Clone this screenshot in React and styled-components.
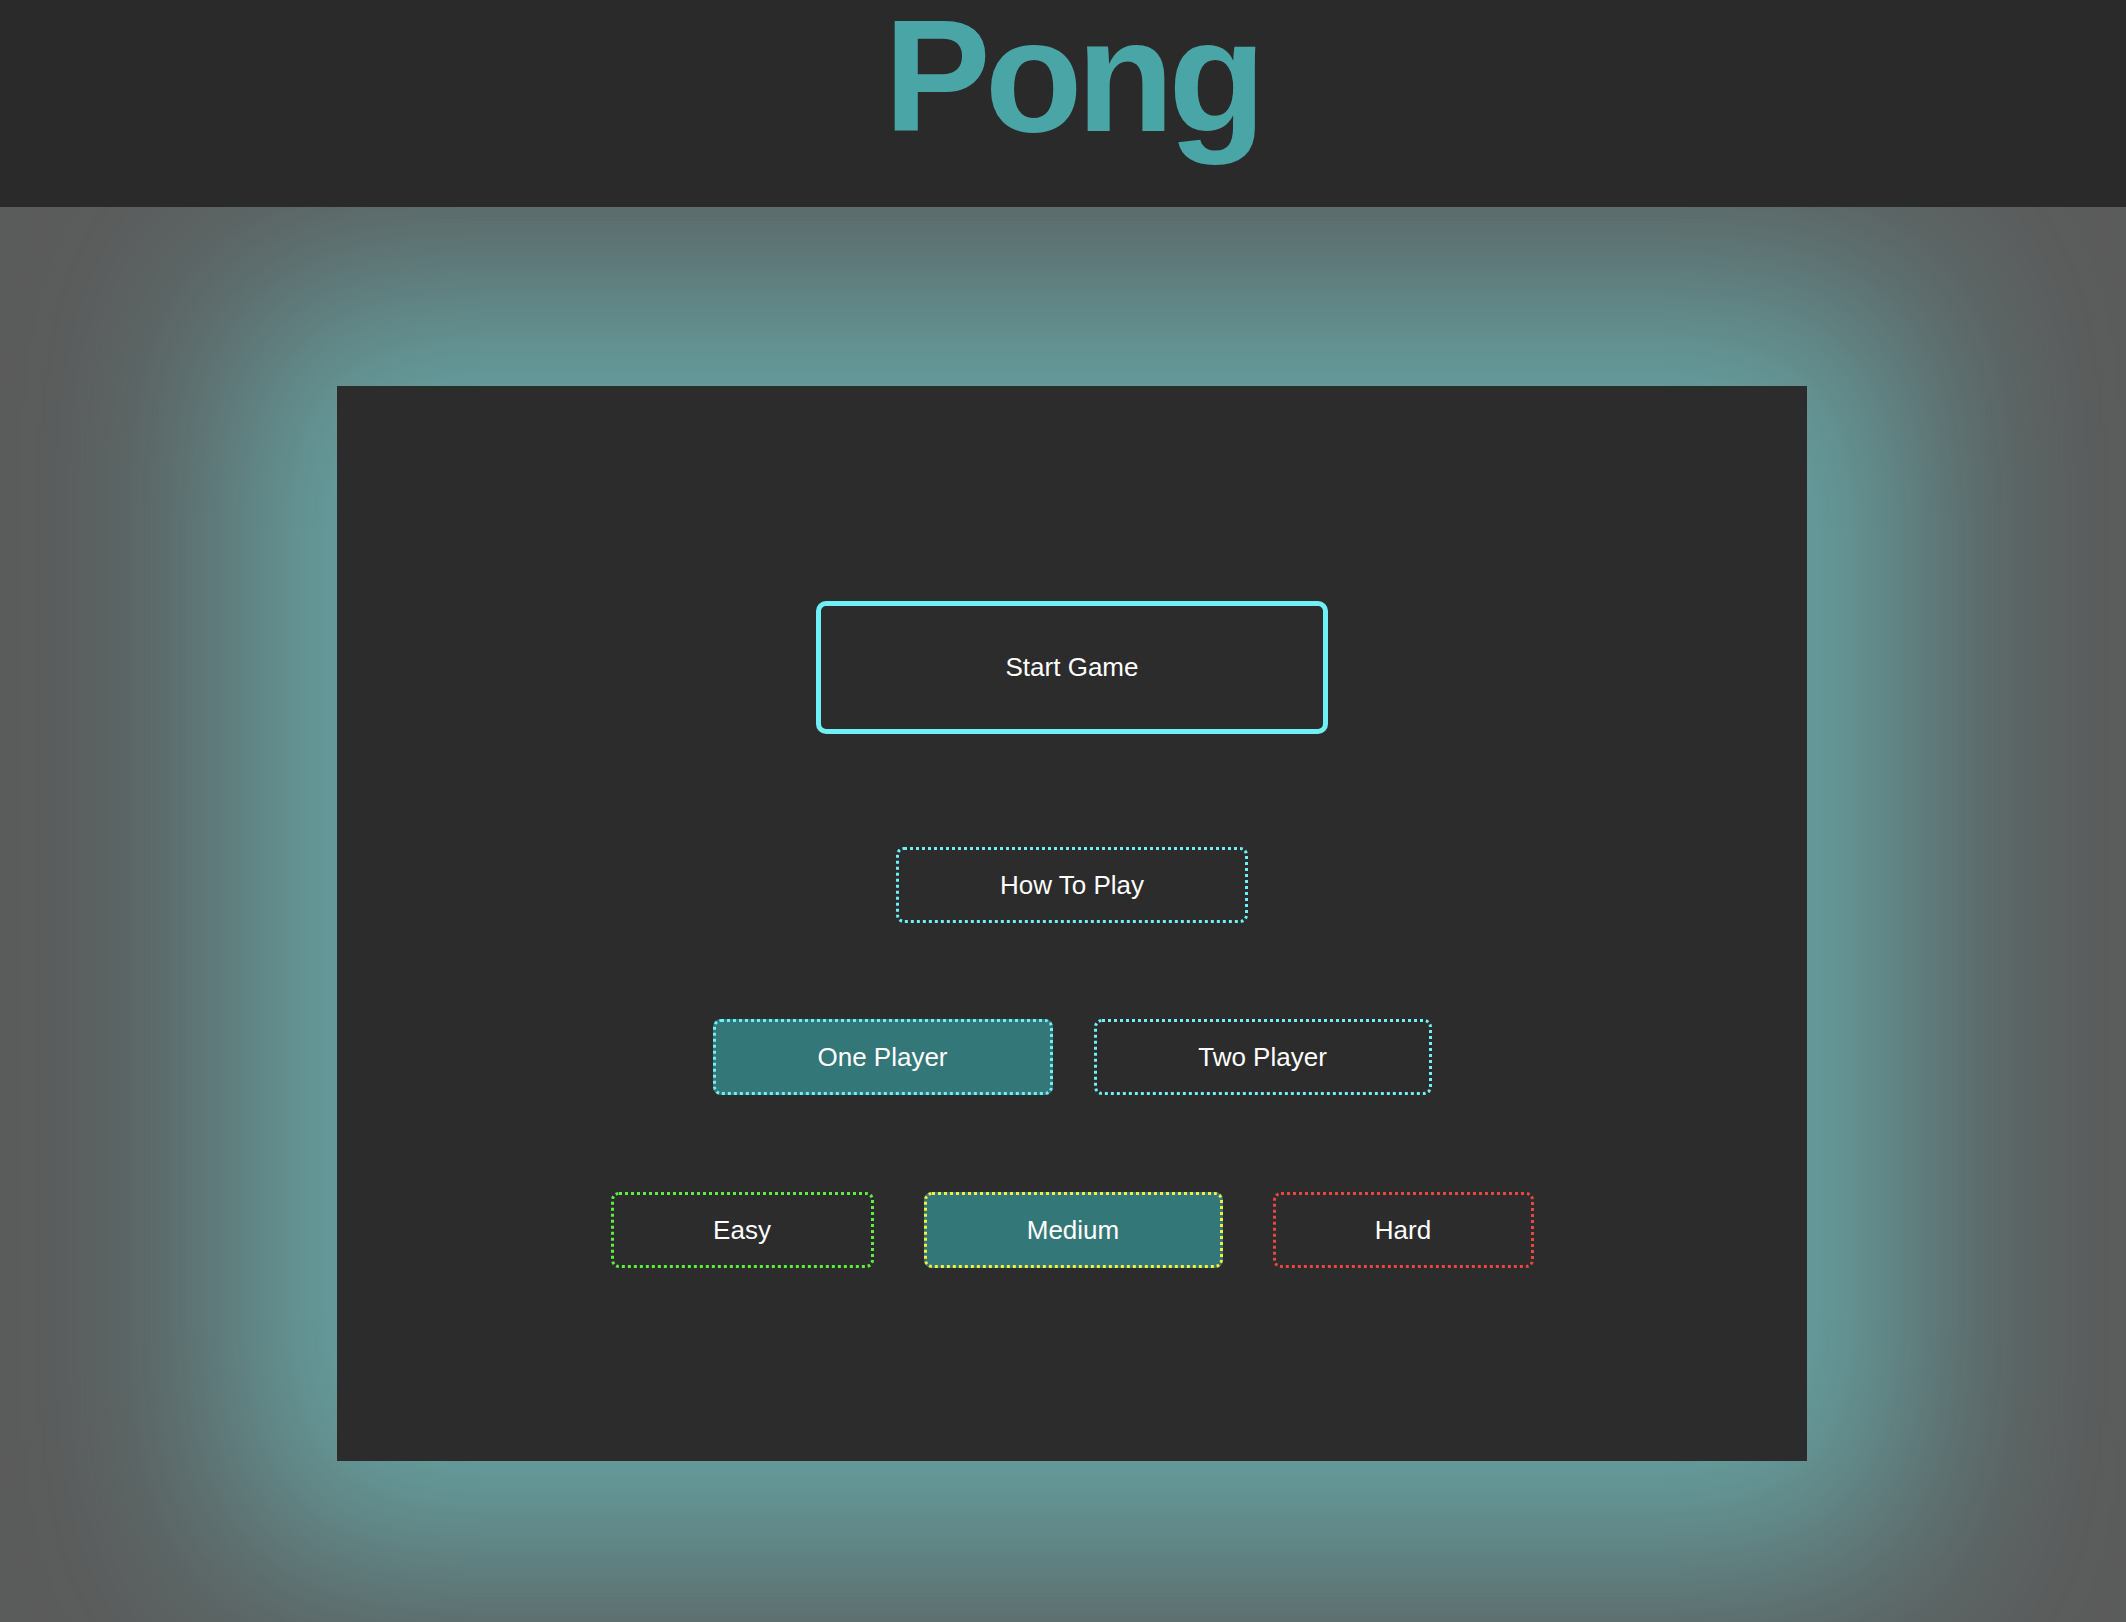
import React, { useState } from "react";
import styled, { createGlobalStyle, css } from "styled-components";

const GlobalStyle = createGlobalStyle`
  html, body {
    margin: 0;
    padding: 0;
    background: #5b5b5b;
    font-family: "Liberation Sans", Arial, sans-serif;
  }
`;

const Page = styled.div`
  min-height: 100vh;
  display: flex;
  flex-direction: column;
`;

const Header = styled.header`
  position: relative;
  z-index: 1;
  height: 207px;
  background: #2a2a2a;
  display: flex;
  justify-content: center;
  padding-left: 18px;
`;

const Title = styled.h1`
  margin: 0;
  font-size: 160px;
  line-height: 180px;
  margin-top: -14px;
  font-weight: 700;
  letter-spacing: -6px;
  color: #4aa6a6;
`;

const Stage = styled.main`
  flex: 1;
  display: flex;
  justify-content: center;
  align-items: flex-start;
  padding: 179px 0 161px 18px;
`;

const Panel = styled.section`
  width: 1470px;
  height: 1075px;
  box-sizing: border-box;
  background: #2c2c2c;
  box-shadow: 0 0 200px 100px #67a6a6;
  display: flex;
  flex-direction: column;
  align-items: center;
  padding-top: 215px;
`;

const Row = styled.div`
  display: flex;
  justify-content: center;
  gap: ${(p) => p.$gap || 0}px;
  margin-top: ${(p) => p.$top || 0}px;
`;

const StartButton = styled.button`
  width: 512px;
  height: 133px;
  box-sizing: border-box;
  background: transparent;
  border: 5px solid #6ef1f6;
  border-radius: 10px;
  color: #fff;
  font-family: inherit;
  font-size: 26px;
  cursor: pointer;
`;

const OptionButton = styled.button`
  height: 76px;
  box-sizing: border-box;
  padding: 0 100px;
  background: ${(p) => (p.$active ? "#347779" : "transparent")};
  border: 3px dotted ${(p) => p.$color || "#6ef1f6"};
  border-radius: 8px;
  color: #fff;
  font-family: inherit;
  font-size: 26px;
  cursor: pointer;
  ${(p) =>
    p.$width &&
    css`
      width: ${p.$width}px;
      padding: 0;
    `}
`;

const difficulties = [
  { name: "Easy", color: "#5cf03c", width: 263 },
  { name: "Medium", color: "#f3ef3c", width: 299 },
  { name: "Hard", color: "#e9463f", width: 261 },
];

export default function App() {
  const [players, setPlayers] = useState(1);
  const [level, setLevel] = useState("Medium");

  return (
    <Page>
      <GlobalStyle />
      <Header>
        <Title>Pong</Title>
      </Header>
      <Stage>
        <Panel>
          <StartButton>Start Game</StartButton>
          <Row $top={113}>
            <OptionButton $width={352}>How To Play</OptionButton>
          </Row>
          <Row $top={96} $gap={41}>
            <OptionButton $width={340} $active={players === 1} onClick={() => setPlayers(1)}>
              One Player
            </OptionButton>
            <OptionButton $width={338} $active={players === 2} onClick={() => setPlayers(2)}>
              Two Player
            </OptionButton>
          </Row>
          <Row $top={97} $gap={50}>
            {difficulties.map((d) => (
              <OptionButton
                key={d.name}
                $width={d.width}
                $color={d.color}
                $active={level === d.name}
                onClick={() => setLevel(d.name)}
              >
                {d.name}
              </OptionButton>
            ))}
          </Row>
        </Panel>
      </Stage>
    </Page>
  );
}
